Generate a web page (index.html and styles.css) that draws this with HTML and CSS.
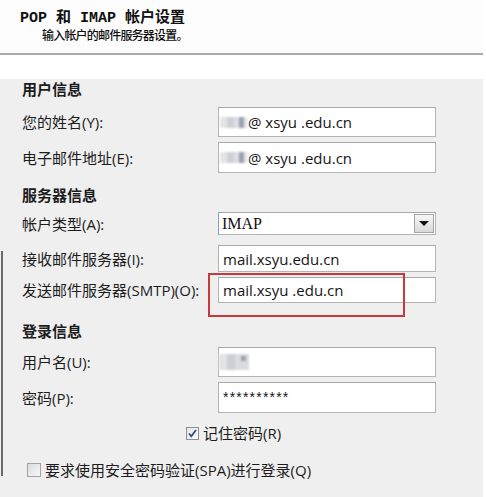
FILE: index.html
```html
<!DOCTYPE html>
<html lang="zh-CN">
<head>
<meta charset="utf-8">
<title>POP 和 IMAP 帐户设置</title>
<link rel="stylesheet" href="styles.css">
</head>
<body>
<div class="header">
  <div class="title">POP 和 IMAP 帐户设置</div>
  <div class="subtitle">输入帐户的邮件服务器设置。</div>
</div>
<div class="panel">
  <div class="section-title s1">用户信息</div>
  <div class="row r1">
    <span class="label">您的姓名(Y):</span>
    <div class="field"><span class="blur"></span>@ xsyu .edu.cn</div>
  </div>
  <div class="row r2">
    <span class="label">电子邮件地址(E):</span>
    <div class="field"><span class="blur"></span>@ xsyu .edu.cn</div>
  </div>

  <div class="section-title s2">服务器信息</div>
  <div class="row r3">
    <span class="label">帐户类型(A):</span>
    <div class="field select"><span class="select-text">IMAP</span><span class="drop-btn"><span class="tri"></span></span></div>
  </div>
  <div class="row r4">
    <span class="label">接收邮件服务器(I):</span>
    <div class="field">mail.xsyu.edu.cn</div>
  </div>
  <div class="row r5">
    <span class="label">发送邮件服务器(SMTP)(O):</span>
    <div class="field highlighted">mail.xsyu .edu.cn<span class="red-box"></span></div>
  </div>

  <div class="section-title s3">登录信息</div>
  <div class="row r6">
    <span class="label">用户名(U):</span>
    <div class="field"><span class="blur user"></span></div>
  </div>
  <div class="row r7">
    <span class="label">密码(P):</span>
    <div class="field password">**********</div>
  </div>

  <div class="check-row remember">
    <span class="checkbox checked"><svg viewBox="0 0 13 13" width="13" height="13"><path d="M3 6.5 L5.3 9.3 L10 3" fill="none" stroke="#2d4f86" stroke-width="1.8"/></svg></span>
    <span class="check-label">记住密码(R)</span>
  </div>
  <div class="check-row spa">
    <span class="checkbox"></span>
    <span class="check-label">要求使用安全密码验证(SPA)进行登录(Q)</span>
  </div>
</div>
</body>
</html>
```

FILE: styles.css
```css
html, body {
  margin: 0;
  padding: 0;
  background: #ffffff;
}

body {
  width: 486px;
  height: 497px;
  overflow: hidden;
  color: #1c1c1c;
  font-family: "Open Sans", "Noto Sans CJK SC", sans-serif;
}

.header {
  height: 53px;
  background: #fdfdfd;
  border-bottom: 2px solid #a9a9a9;
  width: 483px;
}

.title {
  padding-top: 10px;
  padding-left: 20px;
  font-family: "Liberation Mono", "Noto Sans CJK SC", monospace;
  font-weight: bold;
  font-size: 15px;
  line-height: 18px;
  color: #111;
}

.subtitle {
  padding-left: 42px;
  font-family: "Noto Sans CJK SC", sans-serif;
  font-weight: 500;
  font-size: 12px;
  letter-spacing: -0.8px;
  line-height: 14px;
  color: #0e0e0e;
}

.panel {
  position: relative;
  width: 483px;
  height: 442px;
  background: #efefef;
  padding-left: 22px;
  box-sizing: border-box;
  font-size: 15px;
}

.panel::before {
  content: "";
  position: absolute;
  left: 1px;
  top: 172px;
  width: 2px;
  height: 225px;
  background: #6a6a6a;
}

.section-title {
  font-family: "Noto Sans CJK SC", sans-serif;
  font-weight: bold;
  font-size: 15px;
  line-height: 20px;
  height: 20px;
}

.s1 { margin-top: 24px; }
.s2 { margin-top: 12px; }
.s3 { margin-top: 18px; }

.row {
  display: grid;
  grid-template-columns: 196px 218px;
  align-items: center;
}

.label {
  line-height: 20px;
  white-space: nowrap;
}

.field {
  position: relative;
  height: 100%;
  box-sizing: border-box;
  background: #fff;
  border: 1px solid #b4b4b4;
  border-top-color: #a9a9a9;
  padding-left: 4px;
  display: flex;
  align-items: center;
  font-size: 15px;
  white-space: nowrap;
  color: #151515;
}

.r1 { margin-top: 8px; height: 30px; }
.r2 { margin-top: 5px; height: 31px; }
.r3 { margin-top: 7px; height: 23px; }
.r4 { margin-top: 10px; height: 27px; }
.r5 { margin-top: 5px; height: 26px; }
.r6 { margin-top: 6px; height: 30px; }
.r7 { margin-top: 5px; height: 31px; }

.blur {
  display: inline-block;
  width: 28px;
  height: 11px;
  margin-left: -3px;
  margin-right: 0;
  background: linear-gradient(90deg, #e4e4e6 0 7px, #cfd0d4 7px 14px, #dedfe2 14px 19px, #9aa0b4 19px 24px, #e8e8ea 24px);
  filter: blur(0.8px);
}

.blur.user {
  width: 30px;
  height: 16px;
  margin-left: -4px;
  background:
    linear-gradient(90deg, transparent 0 22px, #9ea2ad 22px 27px, transparent 27px) 0 2px / 100% 5px no-repeat,
    linear-gradient(90deg, #e3e3e5 0 8px, #cdced2 8px 16px, #dadbe0 16px 30px);
}

.select {
  padding-left: 3px;
  justify-content: space-between;
  border-left-color: #8c9cb8;
}

.select-text {
  font-family: "Liberation Serif", serif;
  font-size: 16px;
  color: #111;
}

.drop-btn {
  width: 20px;
  height: 19px;
  margin-right: 1px;
  box-sizing: border-box;
  border: 1px solid #a4a4a4;
  background: linear-gradient(#f6f6f6, #dadada);
  display: flex;
  align-items: center;
  justify-content: center;
}

.tri {
  width: 0;
  height: 0;
  border-left: 5px solid transparent;
  border-right: 5px solid transparent;
  border-top: 5px solid #111;
}

.red-box {
  position: absolute;
  left: -11px;
  top: -5px;
  width: 197px;
  height: 44px;
  box-sizing: border-box;
  border: 2px solid #c7393d;
}

.password {
  font-family: "Liberation Sans", sans-serif;
  font-size: 14px;
  letter-spacing: 1.2px;
  align-items: flex-start;
  padding-top: 6px;
}

.check-row {
  display: flex;
  align-items: center;
  height: 18px;
}

.check-label {
  margin-left: 4px;
  line-height: 18px;
  white-space: nowrap;
}

.remember {
  margin-top: 11px;
  margin-left: 164px;
}

.spa {
  margin-top: 19px;
  margin-left: 5px;
}

.checkbox {
  display: inline-block;
  width: 14px;
  height: 14px;
  box-sizing: border-box;
  border: 1px solid #a3a3a3;
  background: linear-gradient(135deg, #dcdcdc, #f7f7f7);
}

.checkbox.checked {
  width: 13px;
  height: 13px;
  border-color: #8e8e8e;
  background: linear-gradient(135deg, #e2e6ee, #fbfbfb);
  position: relative;
}

.checkbox.checked svg {
  position: absolute;
  left: -1px;
  top: -1px;
}
```
